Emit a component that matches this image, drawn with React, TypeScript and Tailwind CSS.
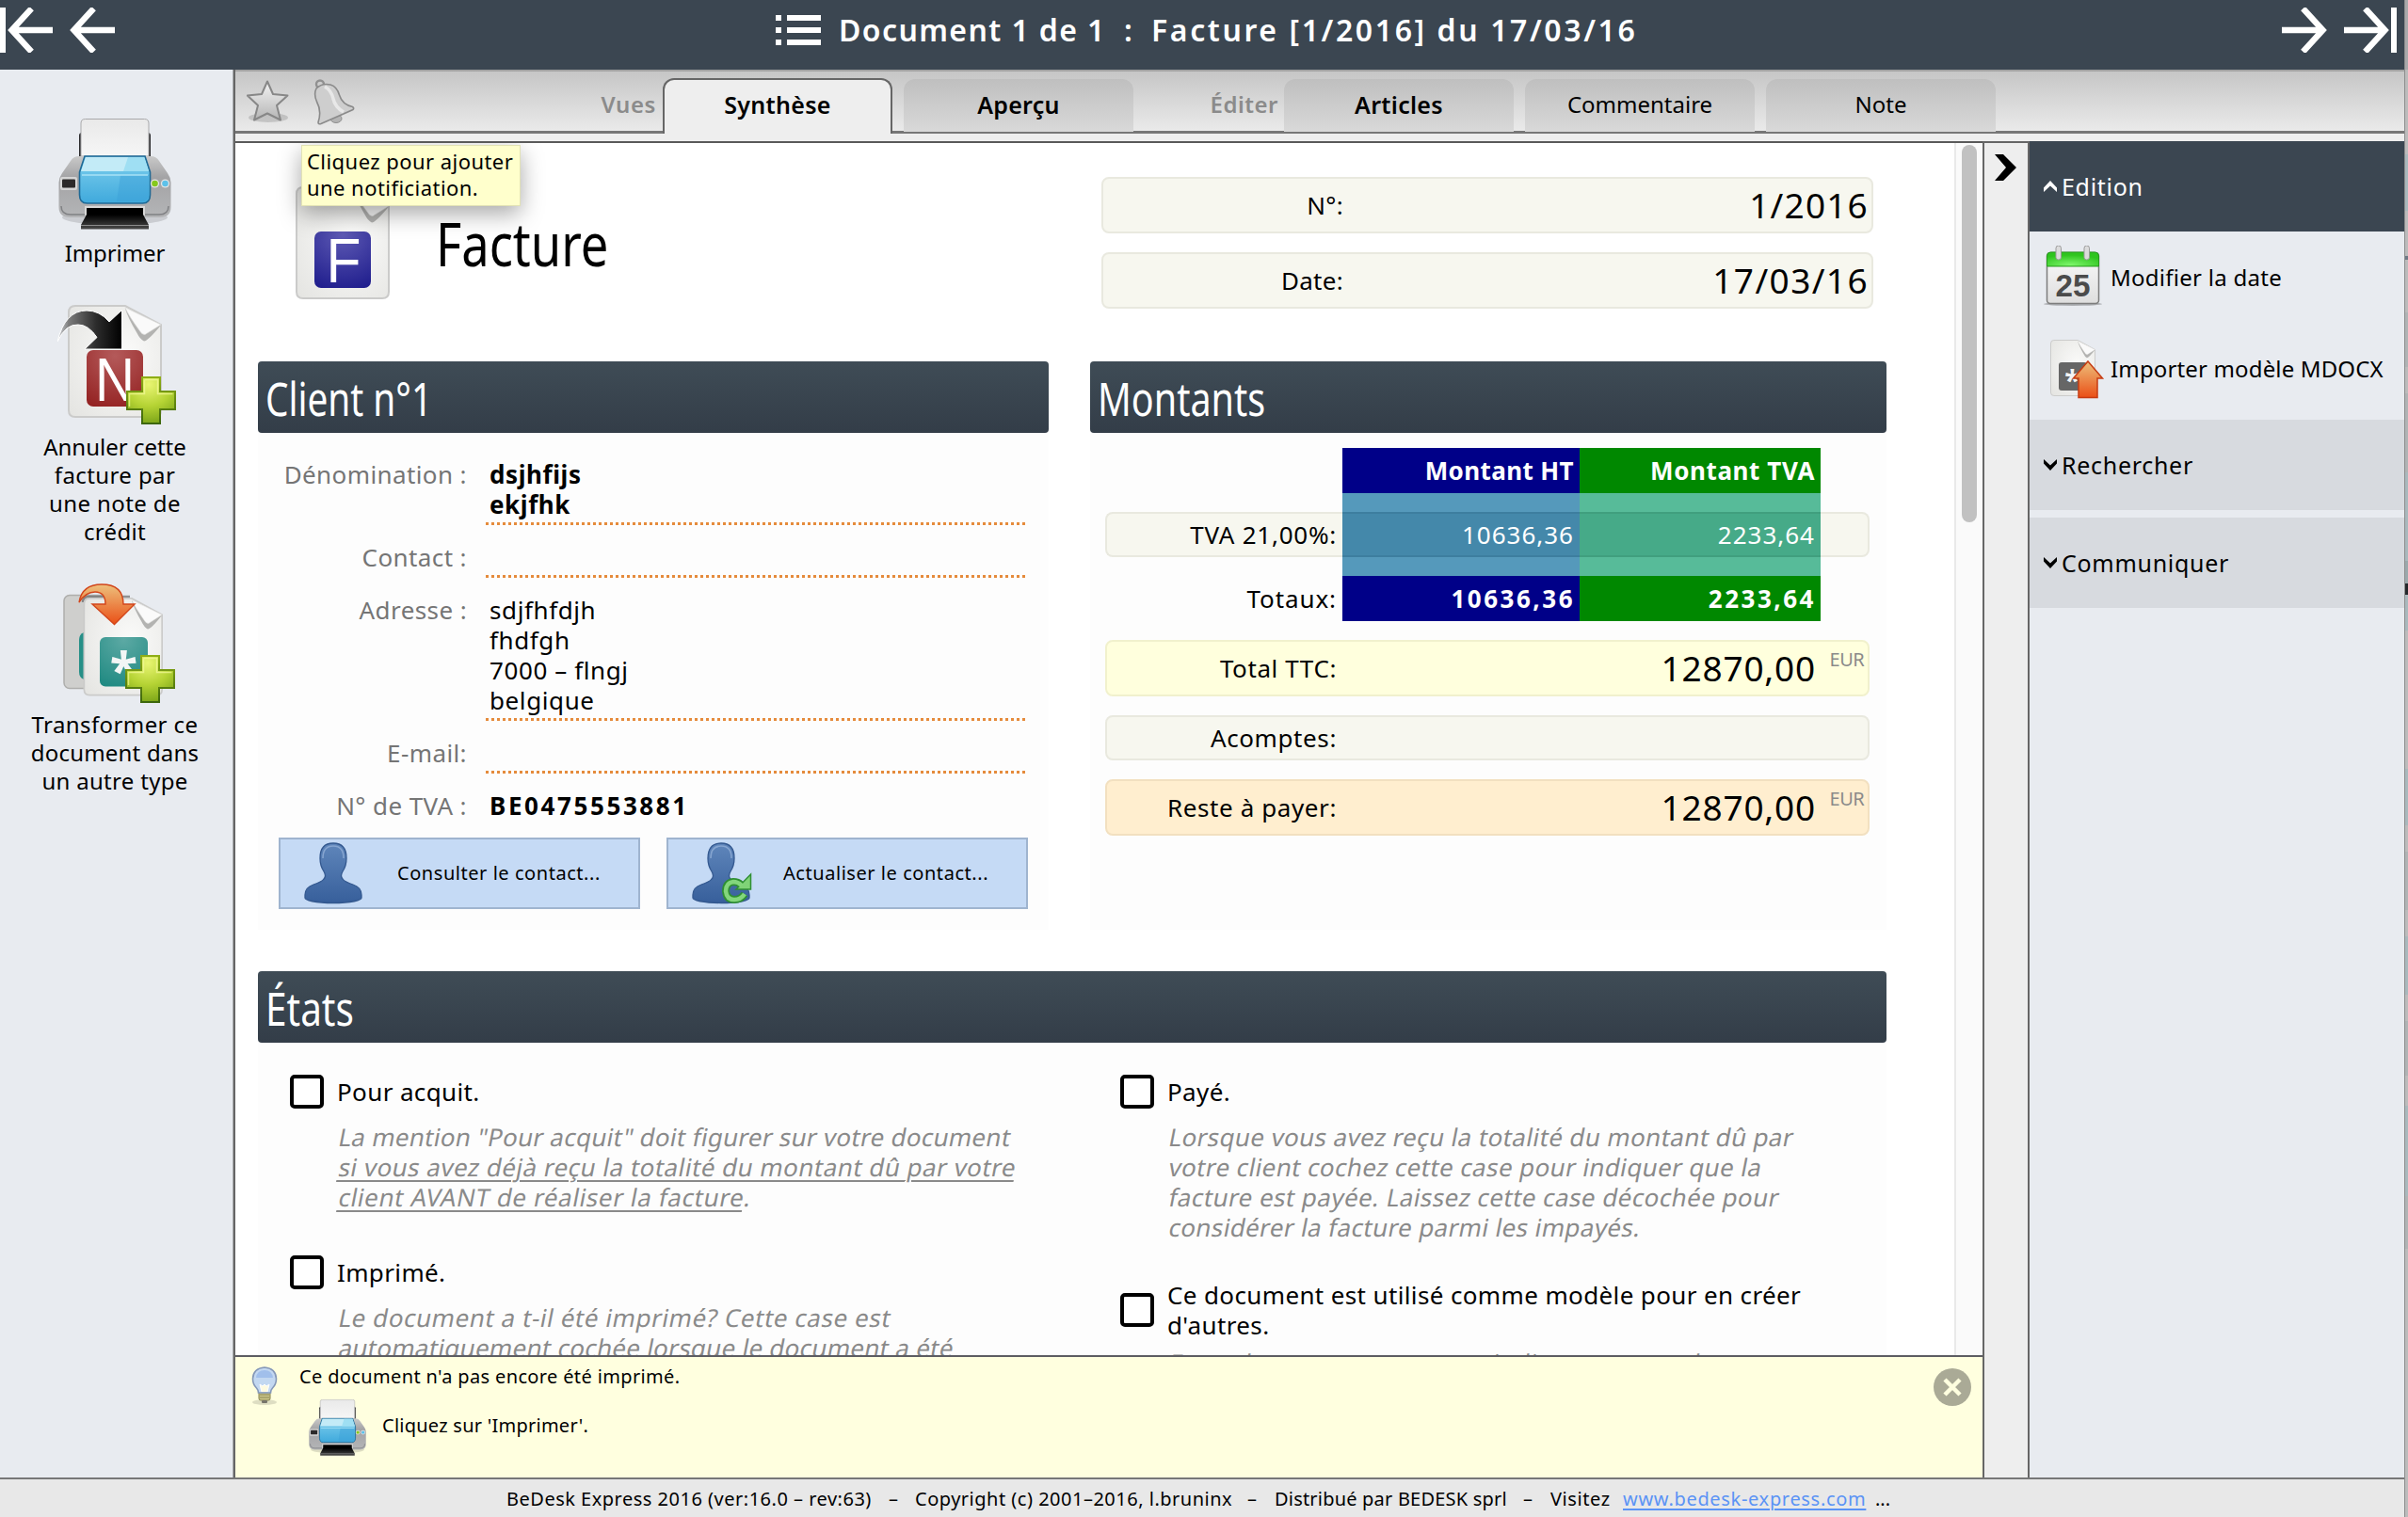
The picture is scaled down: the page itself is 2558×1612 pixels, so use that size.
import React from "react";

const HEADING_GRADIENT = "bg-gradient-to-b from-[#3f4c56] to-[#333d48]";

function Arrow({ flip = false }: { flip?: boolean }) {
  return (
    <svg width="48" height="48" viewBox="0 0 48 48" className={flip ? "-scale-x-100" : ""}>
      <path d="M48 24H7M25.5 1L4.5 24l21 23" fill="none" stroke="#fff" strokeWidth="6.4" />
    </svg>
  );
}

function PrinterIcon({ className = "" }: { className?: string }) {
  return (
    <svg viewBox="0 0 120 118" className={className}>
      <defs>
        <linearGradient id="prBody" x1="0" y1="0" x2="0" y2="1">
          <stop offset="0" stopColor="#c9c9c9" />
          <stop offset=".35" stopColor="#a3a3a5" />
          <stop offset="1" stopColor="#b4b5b7" />
        </linearGradient>
        <linearGradient id="prPaper" x1="0" y1="0" x2="0" y2="1">
          <stop offset="0" stopColor="#e9e9e9" />
          <stop offset="1" stopColor="#f6f6f6" />
        </linearGradient>
        <linearGradient id="prGlass" x1="0" y1="0" x2="0" y2="1">
          <stop offset="0" stopColor="#7fd0ee" />
          <stop offset="1" stopColor="#3fa9dc" />
        </linearGradient>
        <linearGradient id="prTray" x1="0" y1="0" x2="0" y2="1">
          <stop offset="0" stopColor="#000" />
          <stop offset="1" stopColor="#4a4a4a" />
        </linearGradient>
      </defs>
      <ellipse cx="60" cy="105" rx="56" ry="8" fill="#000" opacity=".13" />
      <rect x="22" y="15" width="76" height="30" rx="3" fill="#2b2b2d" />
      <path d="M24 40V5q0-4.500 4.500-4.500h63q4.500 0 4.500 4.500v35z" fill="url(#prPaper)" stroke="#a9a9ab" />
      <path d="M22 40h76q6 0 9 5l9 13q3.500 5 3.500 10v26q0 11-12 11H12.500q-12 0-12-11V68q0-5 3.500-10l9-13q3-5 9-5z" fill="url(#prBody)" />
      <path d="M3 93q0 9 10 9h94q10 0 10-9" fill="none" stroke="#808184" strokeWidth="1.500" />
      <path d="M28 40h64l5.500 17v24q0 9-8 9h-59q-8 0-8-9V57z" fill="url(#prGlass)" stroke="#1f6a96" strokeWidth="1.600" />
      <path d="M29 41h62l5 15H24z" fill="#c3ebf7" />
      <path d="M74 41h17l5 15H69z" fill="#9fdff3" />
      <path d="M66 60h30v20q0 8-8 8H62z" fill="#3b9fd6" opacity=".45" />
      <path d="M25 60h70" stroke="#a9e2f6" strokeWidth="1.500" />
      <rect x="2" y="62" width="18" height="14" rx="2" fill="#d5d5d5" />
      <rect x="4" y="64.500" width="14" height="9" rx="1" fill="#2c2a2a" />
      <circle cx="102.500" cy="69" r="4.600" fill="#e4e4e4" />
      <circle cx="102.500" cy="69" r="3.300" fill="#86c91c" />
      <circle cx="113.500" cy="69" r="4.600" fill="#e4e4e4" />
      <circle cx="113.500" cy="69" r="3.300" fill="#5cc1ea" />
      <path d="M28 93h64v10H28z" fill="#d8d8d8" />
      <path d="M30 95h60v13H30z" fill="#000" />
      <path d="M30 102h60l6 11v4.500H24V113z" fill="url(#prTray)" />
      <path d="M24 113.500h72" stroke="#8b8b8b" strokeWidth="1.200" />
    </svg>
  );
}

function Sheet() {
  return (
    <>
      <path d="M1 8Q1 1 8 1h53l38 20v91q0 7-7 7H8q-7 0-7-7z" fill="url(#sheetFill)" stroke="#cbcbca" strokeWidth="2" />
      <path d="M61 4q3 10 12 25 4 8 8 9.500 4 0 18-17z" fill="#b3b3b1" />
      <path d="M61 3q4 9 15 24 3 5 6 4.500L99 21z" fill="#fafafa" stroke="#dcdcda" strokeWidth=".6" />
    </>
  );
}

function SharedDefs() {
  return (
    <svg className="absolute h-0 w-0">
      <defs>
        <radialGradient id="sheetFill" cx=".6" cy=".45" r=".8">
          <stop offset="0" stopColor="#fbfbfa" />
          <stop offset="1" stopColor="#e4e4e1" />
        </radialGradient>
        <radialGradient id="blueTile" cx=".5" cy=".05" r="1">
          <stop offset="0" stopColor="#5e5ab4" />
          <stop offset="1" stopColor="#211f8e" />
        </radialGradient>
        <radialGradient id="redTile" cx=".5" cy=".1" r="1">
          <stop offset="0" stopColor="#b45a5a" />
          <stop offset="1" stopColor="#932020" />
        </radialGradient>
        <radialGradient id="tealTile" cx=".5" cy=".05" r="1">
          <stop offset="0" stopColor="#5ca9a4" />
          <stop offset="1" stopColor="#208a82" />
        </radialGradient>
        <radialGradient id="plusFill" cx=".45" cy=".15" r=".95">
          <stop offset="0" stopColor="#e9f573" />
          <stop offset=".5" stopColor="#b5d334" />
          <stop offset="1" stopColor="#6e9a12" />
        </radialGradient>
        <linearGradient id="plusEdge" x1="0" y1="0" x2="0" y2="1">
          <stop offset="0" stopColor="#8fae16" />
          <stop offset="1" stopColor="#3c660c" />
        </linearGradient>
        <linearGradient id="inkArrow">
          <stop offset="0" stopColor="#555" stopOpacity=".1" />
          <stop offset=".2" stopColor="#777" />
          <stop offset=".6" stopColor="#2c2c2c" />
          <stop offset="1" stopColor="#000" />
        </linearGradient>
        <linearGradient id="orangeArrow" x1="0" y1="0" x2="0" y2="1">
          <stop offset="0" stopColor="#edc07c" />
          <stop offset="1" stopColor="#ea4f16" />
        </linearGradient>
        <linearGradient id="personFill" x1="0" y1="0" x2="0" y2="1">
          <stop offset="0" stopColor="#5f86bb" />
          <stop offset="1" stopColor="#375f9b" />
        </linearGradient>
      </defs>
    </svg>
  );
}

function Plus() {
  return (
    <g>
      <path d="M17 1h19v15h16v19H36v15H17V35H1V16h16z" fill="url(#plusFill)" stroke="url(#plusEdge)" strokeWidth="2" />
      <path d="M19.500 3.500h14v15h16M3.500 32V18.500h16v-15" fill="none" stroke="#f3fa9b" strokeWidth="1.500" opacity=".7" />
    </g>
  );
}

function CreditNoteIcon() {
  return (
    <svg width="126" height="130" viewBox="0 0 126 130">
      <g transform="translate(11 0)">
        <Sheet />
      </g>
      <rect x="31" y="48" width="60" height="60" rx="7" fill="url(#redTile)" />
      <text x="61" y="101.500" textAnchor="middle" fontSize="65" textLength="42" lengthAdjust="spacingAndGlyphs" fontFamily="Liberation Sans" fill="#fff">N</text>
      <path d="M0 39Q8 6 31 6q14 0 24 12L68.500 5.500V47H29l13-12.500Q33 21 22 21 9 20 0 39z" fill="url(#inkArrow)" stroke="#fff" strokeWidth="1" />
      <g transform="translate(73 76)">
        <Plus />
      </g>
    </svg>
  );
}

function TransformIcon() {
  return (
    <svg width="120" height="129" viewBox="0 0 120 129">
      <rect x="1" y="12.500" width="60" height="99" rx="6" fill="#cfcfcd" stroke="#aeaeac" strokeWidth="1.500" />
      <path d="M24 52h-2q-5 2-5 8v34q0 6 5 8h2z" fill="#268f87" />
      <path d="M21 20q0-6 6-6h44" fill="none" stroke="#555" strokeWidth="2.500" opacity=".6" />
      <g transform="translate(21.500 15) scale(.845 .87)">
        <Sheet />
      </g>
      <rect x="39" y="57" width="51" height="52.500" rx="6" fill="url(#tealTile)" />
      <text x="64.500" y="112" textAnchor="middle" fontSize="54" fontWeight="700" fontFamily="Noto Sans" fill="#f2f6f5">*</text>
      <path d="M17 20Q20 1 41 1q23 0 23 21h12L54.500 43.500 31 22h14q0-13-11-13-10 0-17 11z" fill="url(#orangeArrow)" stroke="#d2461b" strokeWidth="1.400" />
      <g transform="translate(66 76)">
        <Plus />
      </g>
    </svg>
  );
}

function InvoiceIcon() {
  return (
    <svg width="100" height="120" viewBox="0 0 100 120">
      <Sheet />
      <rect x="20" y="48" width="60" height="60" rx="7" fill="url(#blueTile)" />
      <text x="51" y="102" textAnchor="middle" fontSize="66" textLength="37" lengthAdjust="spacingAndGlyphs" fontFamily="Liberation Sans" fill="#fff">F</text>
    </svg>
  );
}

function StarIcon() {
  return (
    <svg width="46" height="46" viewBox="0 0 46 46" className="mt-[2px]">
      <defs>
        <linearGradient id="starFill" x1="0" y1="0" x2="0" y2="1">
          <stop offset="0" stopColor="#f4f4f4" />
          <stop offset="1" stopColor="#b5b5b5" />
        </linearGradient>
      </defs>
      <ellipse cx="23" cy="40" rx="21" ry="5" fill="#000" opacity=".14" />
      <path d="M22 1.500l6 13.500 15.500 1.500-11.500 10.500 4 15.500-14-7-14 7 4-15.500L.8 16.500 16 15z" fill="url(#starFill)" stroke="#878787" strokeWidth="2" strokeLinejoin="round" />
    </svg>
  );
}

function BellIcon() {
  return (
    <svg width="44" height="50" viewBox="0 0 44 50">
      <circle cx="7" cy="5.500" r="4" fill="none" stroke="#919191" strokeWidth="2.400" />
      <ellipse cx="24" cy="42" rx="6" ry="4.500" fill="#b4b4b4" stroke="#8f8f8f" />
      <path d="M3 10Q9 4 18 6q7 2 9.500 11 3 10 14 12.500 2 1.500.5 3L8 47.500q-3 1-3-1.500Q9 34 3.500 24 0 16 3 10z" fill="#cecece" stroke="#8a8a8a" strokeWidth="1.600" />
      <path d="M12 8q7 4 9 13t11 14" fill="none" stroke="#e8e8e8" strokeWidth="3.500" />
    </svg>
  );
}

function PersonIcon({ refresh = false }: { refresh?: boolean }) {
  return (
    <svg width="64" height="66" viewBox="0 0 64 66">
      <ellipse cx="31" cy="62" rx="27" ry="2.500" fill="#28466f" opacity=".3" />
      <path d="M31 1q14 0 14 16 0 8-4 14-3 5 0 8 2 3 11 6 9 3 9 11v3q0 2-7 3.500-10 2-23 2t-23-2Q1 61 1 59v-3q0-8 9-11 9-3 11-6 3-3 0-8-4-6-4-14Q17 1 31 1z" fill="url(#personFill)" stroke="#33588f" strokeWidth="1.300" />
      <path d="M20 17q0-13 11-13t11 13" fill="none" stroke="#86a5d0" strokeWidth="1.500" />
      {refresh && (
        <>
          <path d="M56 55q-4 6-11 6-8 0-9-9 0-9 8-10 5 0 8 3" fill="none" stroke="#2f8f33" strokeWidth="8" />
          <path d="M62.500 34v16H47z" fill="#7fd377" stroke="#2f8f33" strokeWidth="1.500" />
          <path d="M56 55q-4 6-11 6-8 0-9-9 0-9 8-10 5 0 9 4" fill="none" stroke="#83d67c" strokeWidth="4.500" />
        </>
      )}
    </svg>
  );
}

function CalendarIcon() {
  return (
    <svg width="62" height="64" viewBox="0 0 62 64">
      <defs>
        <radialGradient id="calTop" cx=".45" cy=".9" r=".7">
          <stop offset="0" stopColor="#7df76a" />
          <stop offset="1" stopColor="#2fc41f" />
        </radialGradient>
        <linearGradient id="calPage" x1="0" y1="0" x2="0" y2="1">
          <stop offset="0" stopColor="#fafafa" />
          <stop offset="1" stopColor="#dedede" />
        </linearGradient>
      </defs>
      <ellipse cx="31" cy="62" rx="31" ry="2" fill="#000" opacity=".25" />
      <rect x="3.500" y="7.500" width="55" height="54" rx="3.500" fill="url(#calPage)" stroke="#7d7d7d" strokeWidth="1.500" />
      <path d="M3.500 22V11q0-4 4-4h47q4 0 4 4v11z" fill="url(#calTop)" stroke="#279b1d" />
      <rect x="13" y="0" width="5.500" height="15" rx="2.700" fill="#dcdcdc" stroke="#9b9b9b" />
      <rect x="43" y="0" width="5.500" height="15" rx="2.700" fill="#dcdcdc" stroke="#9b9b9b" />
      <text x="31" y="54" textAnchor="middle" fontSize="34" fontWeight="700" textLength="37" lengthAdjust="spacingAndGlyphs" fontFamily="Liberation Sans" fill="#4b4b4b">25</text>
    </svg>
  );
}

function ImportIcon() {
  return (
    <svg width="58" height="63" viewBox="0 0 58 63">
      <g transform="scale(.48 .5)">
        <Sheet />
      </g>
      <rect x="9" y="24" width="30" height="30" rx="3" fill="#666" />
      <text x="23.500" y="54" textAnchor="middle" fontSize="30" fontWeight="700" fontFamily="Noto Sans" fill="#f4f4f4">*</text>
      <path d="M40 23l15.500 18H50v20.500H30V41h-5.500z" fill="url(#orangeArrow)" stroke="#c63c13" strokeWidth="1.500" />
    </svg>
  );
}

function BulbIcon() {
  return (
    <svg width="30" height="42" viewBox="0 0 30 42">
      <ellipse cx="15" cy="38" rx="13" ry="3" fill="#000" opacity=".13" />
      <rect x="9" y="25" width="12" height="11" rx="2" fill="#c9c487" stroke="#86824f" />
      <path d="M10 30h10M10 33h10" stroke="#8b8755" />
      <rect x="12" y="36" width="6" height="3" rx="1" fill="#77756b" />
      <path d="M15 1q12 1 12.500 12 0 6-4 10-2 2-2 5h-13q0-3-2-5-4-4-4-10Q3 2 15 1z" fill="#c3d8f1" stroke="#8598b8" strokeWidth="1.600" />
      <path d="M6 12q1-8 9-8t9 8z" fill="#98b9ea" opacity=".8" />
      <path d="M12 27l-2-8 3 2 2-2 2 2 3-2-2 8" fill="#fffbe0" stroke="#fff" />
    </svg>
  );
}

function SideAction({ icon, lines, className, textClass }: { icon: React.ReactNode; lines: [string, string][]; className: string; textClass: string }) {
  return (
    <div className={`flex flex-col items-center ${className}`}>
      {icon}
      <div className={`w-full pr-[3px] text-center text-[24px] leading-[30px] ${textClass}`}>
        {lines.map(([t, c]) => (
          <div key={t} className={c}>{t}</div>
        ))}
      </div>
    </div>
  );
}

function Tab({ label, bold = false, className = "" }: { label: string; bold?: boolean; className?: string }) {
  return (
    <div
      className={`h-[56px] w-[244px] rounded-t-[12px] bg-gradient-to-b from-[#bfbfbf] to-[#d9d9d9] text-center leading-[54px] ${bold ? "text-[25px] font-semibold tracking-[0.3px]" : "text-[24px]"} ${className}`}
    >
      {label}
    </div>
  );
}

function SectionTitle({ text, scale }: { text: string; scale: string }) {
  return (
    <div className={`flex h-[76px] items-center rounded-[4px] pl-[8px] text-white ${HEADING_GRADIENT}`}>
      <span className={`origin-left whitespace-nowrap pt-[2px] text-[50px] leading-none ${scale}`}>{text}</span>
    </div>
  );
}

function TopField({ label, value, tracking }: { label: string; value: string; tracking: string }) {
  return (
    <div className="flex h-[60px] w-[820px] items-center rounded-[8px] border-2 border-[#e9e9df] bg-[#f7f7ef]">
      <div className="w-[255px] text-right text-[26px] tracking-[0.3px]">{label}</div>
      <div className={`flex-1 pr-[3px] pb-[2px] text-right text-[37px] leading-none ${tracking}`}>{value}</div>
    </div>
  );
}

function ClientRow({ label, lines, bold = false, last = false }: { label: string; lines: string[]; bold?: boolean; last?: boolean }) {
  return (
    <div className={`flex text-[26px] leading-[32px] ${last ? "" : "mb-[18px]"}`}>
      <div className="w-[222px] text-right tracking-[0.4px] text-[#757575]">{label}</div>
      <div className={`ml-[20px] w-[573px] pl-[4px] ${last ? "" : "border-b-[3px] border-dotted border-[#e58b3c] pb-[3px]"} ${bold ? "font-bold" : ""}`}>
        {lines.map((l, i) => (
          <div key={i} className={`h-8 whitespace-nowrap ${last ? "tracking-[2.6px]" : "tracking-[0.6px]"}`}>{l}</div>
        ))}
      </div>
    </div>
  );
}

function ContactButton({ label, refresh = false }: { label: string; refresh?: boolean }) {
  return (
    <div className="flex h-[76px] w-[384px] items-center border-2 border-[#9fb4cf] bg-[#c5daf5] pl-[25px]">
      <PersonIcon refresh={refresh} />
      <span className={`whitespace-nowrap pb-px text-[20px] tracking-[0.55px] ${refresh ? "ml-[33px]" : "ml-[35px]"}`}>{label}</span>
    </div>
  );
}

function AmountBox({ label, value, skin, tall = false }: { label: string; value?: string; skin: string; tall?: boolean }) {
  return (
    <div className={`mt-5 flex rounded-[8px] border-2 ${skin} ${tall ? "h-[60px]" : "h-[48px]"}`}>
      <div className="flex w-[244px] items-center justify-end text-[26px] tracking-[0.6px]">{label}</div>
      {value && (
        <>
          <div className="flex w-[509px] items-center justify-end pb-[2px] text-[37px] leading-none tracking-[0.8px]">{value}</div>
          <div className="flex-1 pt-[3px] pr-[4px] text-right text-[20px] leading-[32px] tracking-[-0.6px] text-[#8a8a8a]">EUR</div>
        </>
      )}
    </div>
  );
}

function CheckItem({ lines, children, className = "", descClass = "mt-[14px]" }: { lines: string[]; children: React.ReactNode; className?: string; descClass?: string }) {
  return (
    <div className={`whitespace-nowrap text-[26px] leading-[32px] tracking-[0.37px] ${className}`}>
      <div className="flex items-center">
        <div className="h-[36px] w-[36px] rounded-[5px] border-4 border-black bg-white" />
        <div className="ml-[14px]">
          {lines.map((l) => (
            <div key={l}>{l}</div>
          ))}
        </div>
      </div>
      <div className={`ml-[49px] text-[#8a8a8a] ${descClass}`}>{children}</div>
    </div>
  );
}

function Slanted({ children }: { children: React.ReactNode }) {
  return <div className="origin-bottom-left -skew-x-[11deg]">{children}</div>;
}

function MenuHeader({ label, open = false }: { label: string; open?: boolean }) {
  return (
    <div className={`flex h-[96px] items-center pl-[15px] text-[25px] tracking-[0.7px] ${open ? "bg-[#3b4651] text-white" : "bg-[#d7dadf]"}`}>
      <svg width="14" height="12" viewBox="0 0 14 12" className={open ? "" : "-scale-y-100"}>
        <path d="M0 12V7.500L7 0l7 7.500V12L7 5.500z" fill="currentColor" />
      </svg>
      <span className="ml-[5px] pt-[2px]">{label}</span>
    </div>
  );
}

const EDGE: [number, string][] = [
  [74, "bg-[#a9a9ab]"], [90, "bg-[#bcbcbc]"], [60, "bg-[#a9b9bd]"], [48, "bg-[#bcbcbc]"], [4, "bg-[#6e7a86]"], [56, "bg-[#bcbcbc]"],
  [58, "bg-[#b0b4b5]"], [28, "bg-[#bcbcbc]"], [84, "bg-[#b0b4b5]"], [94, "bg-[#a9b9bd]"], [24, "bg-[#9ba9ac]"], [12, "bg-[#24282b]"],
  [38, "bg-[#a9b9bd]"], [147, "bg-[#bcbcbc]"], [60, "bg-[#a9b9bd]"], [28, "bg-[#bcbcbc]"], [62, "bg-[#b0b4b5]"], [28, "bg-[#bcbcbc]"],
  [62, "bg-[#a9b9bd]"], [28, "bg-[#bcbcbc]"], [58, "bg-[#b0b4b5]"], [32, "bg-[#bcbcbc]"], [96, "bg-[#a9b9bd]"], [56, "bg-[#b0b4b5]"],
];

export default function App() {
  return (
    <div className="flex h-[1612px] w-[2558px] overflow-hidden bg-[#bcbcbc] font-['Noto_Sans',sans-serif] text-black">
      <SharedDefs />
      <div className="flex w-[2554px] flex-col">
        {/* title bar */}
        <header className="flex h-[74px] shrink-0 items-start bg-[#3b4651] pt-[8px] text-white">
          <div className="h-[48px] w-[6px] bg-white" />
          <div className="ml-[2px]"><Arrow /></div>
          <div className="ml-[18px]"><Arrow /></div>
          <svg width="48" height="32" viewBox="0 0 48 32" className="mt-[8px] ml-[702px]">
            <path d="M0 0h6v6H0zM12 0h36v6H12zM0 13h6v6H0zM12 13h36v6H12zM0 26h6v6H0zM12 26h36v6H12z" fill="#fff" />
          </svg>
          <div className="ml-[18px] flex h-[48px] w-[1534px] items-center whitespace-pre text-[32px] font-semibold">
            <span className="w-[304px] pl-px tracking-[1.4px]">Document 1 de 1</span>
            <span className="w-[29px]">:</span>
            <span className="tracking-[2.6px]">Facture [1/2016] du 17/03/16</span>
          </div>
          <Arrow flip />
          <div className="ml-[18px]"><Arrow flip /></div>
          <div className="ml-[2px] h-[48px] w-[6px] bg-white" />
        </header>

        <div className="flex min-h-0 flex-1">
          {/* action bar */}
          <aside className="flex w-[250px] shrink-0 flex-col border-r-[2px] border-[#666] bg-[#e8ebf0]">
            <div className="flex flex-1 flex-col border-r border-[#a9abae]">
              <SideAction
                className="pt-[52px]"
                textClass="pt-[10px]"
                icon={<PrinterIcon className="mr-[3px] h-[118px] w-[120px]" />}
                lines={[["Imprimer", "tracking-[-0.1px]"]]}
              />
              <SideAction
                className="pt-[40px]"
                textClass="pt-[6px]"
                icon={<CreditNoteIcon />}
                lines={[["Annuler cette", ""], ["facture par", "tracking-[0.4px]"], ["une note de", "tracking-[0.4px]"], ["crédit", "tracking-[0.3px]"]]}
              />
              <SideAction
                className="pt-[40px]"
                textClass="pt-[6px]"
                icon={<div className="pl-[6px]"><TransformIcon /></div>}
                lines={[["Transformer ce", "tracking-[0.4px]"], ["document dans", "tracking-[0.2px]"], ["un autre type", "tracking-[0.3px]"]]}
              />
            </div>
          </aside>

          <div className="flex min-w-0 flex-1 flex-col">
            {/* tabs */}
            <div className="flex h-[68px] shrink-0 items-start border-t-2 border-[#a3a3a3] bg-gradient-to-b from-[#c6c6c6] to-[#ececec]">
              <div className="flex h-full flex-1 border-b-[3px] border-[#777]">
                <div className="ml-[12px] pt-[7px]"><StarIcon /></div>
                <div className="ml-[25px] pt-[8px]"><BellIcon /></div>
                <div className="ml-[59px] w-[268px] pt-[8px] pr-[7px] text-right text-[24px] leading-[54px] font-semibold tracking-[0.6px] text-[#8b8b8b]">Vues</div>
                <div className="mt-[7px] -mb-[3px] h-[61px] w-[244px] shrink-0 rounded-t-[12px] border-2 border-b-0 border-[#666] bg-[#eee] text-center text-[25px] leading-[53px] font-semibold tracking-[0.3px]">Synthèse</div>
                <Tab label="Aperçu" bold className="mt-[8px] ml-[12px]" />
                <div className="w-[160px] pt-[8px] pr-[6px] text-right text-[24px] leading-[54px] font-semibold tracking-[0.5px] text-[#8b8b8b]">Éditer</div>
                <Tab label="Articles" bold className="mt-[8px]" />
                <Tab label="Commentaire" className="mt-[8px] ml-[12px]" />
                <Tab label="Note" className="mt-[8px] ml-[12px]" />
              </div>
            </div>
            <div className="h-[8px] shrink-0 bg-[#eee]" />

            <div className="flex min-h-0 flex-1">
              <div className="flex w-[1858px] shrink-0 flex-col border-r-2 border-[#666]">
                {/* document */}
                <div className="flex h-[1290px] shrink-0 border-t-2 border-[#5a5a5a] bg-white">
                  <main className="relative h-full w-[1826px] overflow-hidden pr-[72px] pl-[24px]">
                    <div className="absolute top-[2px] left-[70px] h-[65px] w-[233px] border border-[#e2e2b4] bg-[#ffffcc] pt-[2px] pl-[5px] text-[22px] leading-[28px] tracking-[0.45px] whitespace-nowrap shadow-[0_8px_24px_rgba(0,0,0,0.35)]">
                      <div>Cliquez pour ajouter</div>
                      <div>une notificiation.</div>
                    </div>

                    <div className="flex h-[232px]">
                      <div className="flex w-[896px] pt-[46px] pl-[40px]">
                        <InvoiceIcon />
                        <div className="mt-[29px] ml-[49px] h-[64px] origin-left scale-x-[0.82] text-[64px] leading-[64px]">Facture</div>
                      </div>
                      <div className="flex flex-col gap-[20px] pt-[36px]">
                        <TopField label="N°:" value="1/2016" tracking="tracking-[1.2px]" />
                        <TopField label="Date:" value="17/03/16" tracking="tracking-[1.4px]" />
                      </div>
                    </div>

                    <div className="flex h-[648px] gap-[44px]">
                      <section className="h-[604px] w-[840px] bg-[#fdfdfd]">
                        <SectionTitle text="Client n°1" scale="scale-x-[0.775]" />
                        <div className="pt-[28px]">
                          <ClientRow label="Dénomination :" lines={["dsjhfijs", "ekjfhk"]} bold />
                          <ClientRow label="Contact :" lines={[""]} />
                          <ClientRow label="Adresse :" lines={["sdjfhfdjh", "fhdfgh", "7000 – flngj", "belgique"]} />
                          <ClientRow label="E-mail:" lines={[""]} />
                          <ClientRow label="N° de TVA :" lines={["BE0475553881"]} bold last />
                        </div>
                        <div className="mt-[18px] ml-[22px] flex gap-[28px]">
                          <ContactButton label="Consulter le contact..." />
                          <ContactButton label="Actualiser le contact..." refresh />
                        </div>
                      </section>

                      <section className="h-[604px] w-[846px] bg-[#fdfdfd]">
                        <SectionTitle text="Montants" scale="scale-x-[0.79]" />
                        <div className="mr-[18px] ml-[16px] pt-[16px] text-[26px]">
                          <div className="ml-[252px] flex h-[48px] items-center text-right font-bold text-white">
                            <div className="h-full w-[252px] bg-[#000088] pr-[6px] leading-[48px] tracking-[0.4px]">Montant HT</div>
                            <div className="h-full w-[256px] bg-[#008800] pr-[6px] leading-[48px] tracking-[0.6px]">Montant TVA</div>
                          </div>
                          <div className="flex h-[88px] items-center">
                            <div className="h-[48px] w-[252px] rounded-l-[8px] border-2 border-r-0 border-[#e9e9df] bg-[#f7f7ef] pr-[6px] text-right leading-[44px] tracking-[0.75px]">TVA 21,00%:</div>
                            <div className="flex h-full w-[252px] items-center bg-[#5599bb]">
                              <div className="h-[48px] flex-1 border-y-2 border-[#3d7e9f] bg-[#4488aa] pr-[6px] text-right leading-[44px] tracking-[1px] text-white">10636,36</div>
                            </div>
                            <div className="flex h-full w-[256px] items-center bg-[#57bb99]">
                              <div className="h-[48px] flex-1 border-y-2 border-[#409f7e] bg-[#46aa88] pr-[6px] text-right leading-[44px] tracking-[1px] text-white">2233,64</div>
                            </div>
                            <div className="h-[48px] flex-1 rounded-r-[8px] border-2 border-l-0 border-[#e9e9df] bg-[#f7f7ef]" />
                          </div>
                          <div className="flex h-[48px] text-right leading-[48px]">
                            <div className="w-[252px] pr-[6px] tracking-[0.9px]">Totaux:</div>
                            <div className="w-[252px] bg-[#000088] pr-[5px] font-bold tracking-[2.5px] text-white">10636,36</div>
                            <div className="w-[256px] bg-[#008800] pr-[5px] font-bold tracking-[2.5px] text-white">2233,64</div>
                          </div>
                          <AmountBox label="Total TTC:" value="12870,00" tall skin="border-[#f1f1cd] bg-[#ffffdd]" />
                          <AmountBox label="Acomptes:" skin="border-[#e9e9df] bg-[#f7f7ef]" />
                          <AmountBox label="Reste à payer:" value="12870,00" tall skin="border-[#f2e0c0] bg-[#ffeecf]" />
                        </div>
                      </section>
                    </div>

                    <section>
                      <SectionTitle text="États" scale="scale-x-[0.81]" />
                      <div className="flex h-[400px] bg-[#fdfdfd]">
                        <div className="w-[882px] pt-[34px] pl-[34px]">
                          <CheckItem lines={["Pour acquit."]}>
                            <Slanted><span className="tracking-[0.27px]">La mention "Pour acquit" doit figurer sur votre document</span></Slanted>
                            <Slanted><span className="tracking-[0.46px] underline decoration-2 underline-offset-[4px]">si vous avez déjà reçu la totalité du montant dû par votre</span></Slanted>
                            <Slanted><span className="tracking-[0.6px] underline decoration-2 underline-offset-[4px]">client AVANT de réaliser la facture</span>.</Slanted>
                          </CheckItem>
                          <CheckItem lines={["Imprimé."]} className="mt-[46px]">
                            <Slanted><span className="tracking-[0.55px]">Le document a t-il été imprimé? Cette case est</span></Slanted>
                            <Slanted><span className="tracking-[0.27px]">automatiquement cochée lorsque le document a été</span></Slanted>
                          </CheckItem>
                        </div>
                        <div className="pt-[34px] pl-[34px]">
                          <CheckItem lines={["Payé."]}>
                            <Slanted>Lorsque vous avez reçu la totalité du montant dû par</Slanted>
                            <Slanted>votre client cochez cette case pour indiquer que la</Slanted>
                            <Slanted><span className="tracking-[0.42px]">facture est payée. Laissez cette case décochée pour</span></Slanted>
                            <Slanted>considérer la facture parmi les impayés.</Slanted>
                          </CheckItem>
                          <CheckItem lines={["Ce document est utilisé comme modèle pour en créer", "d'autres."]} className="mt-[40px]" descClass="mt-[8px]">
                            <Slanted>En cochant cette case vous indiquez que ce document</Slanted>
                          </CheckItem>
                        </div>
                      </div>
                    </section>
                  </main>
                  <div className="flex w-[30px] justify-center border-l-2 border-[#e9e9e9] bg-[#fafafa] pt-[2px]">
                    <div className="h-[401px] w-[16px] rounded-full bg-[#c1c1c1]" />
                  </div>
                </div>

                {/* notice */}
                <div className="flex flex-1 border-t-2 border-[#5d5d62] bg-[#ffffdf] text-[20px]">
                  <div className="pt-[10px] pl-[16px]"><BulbIcon /></div>
                  <div className="ml-[22px] pt-[7px]">
                    <div className="leading-[28px] tracking-[0.36px]">Ce document n'a pas encore été imprimé.</div>
                    <div className="mt-[10px] ml-[10px] flex items-center">
                      <PrinterIcon className="h-[60px] w-[61px]" />
                      <span className="-mt-[5px] ml-[17px] tracking-[0.25px]">Cliquez sur 'Imprimer'.</span>
                    </div>
                  </div>
                  <svg width="40" height="40" viewBox="0 0 40 40" className="mt-[12px] mr-[12px] ml-auto">
                    <circle cx="20" cy="20" r="20" fill="#aaaa96" />
                    <path d="M12 12l16 16M28 12L12 28" stroke="#ffffdf" strokeWidth="4.500" />
                  </svg>
                </div>
              </div>

              {/* panel toggle */}
              <div className="w-[48px] shrink-0 border-t-2 border-r-2 border-[#666] bg-[#eee] pt-[12px] pl-[11px]">
                <svg width="23" height="28" viewBox="0 0 23 28">
                  <path d="M0 0h9l14 14L9 28H0l12-14z" fill="#000" />
                </svg>
              </div>

              {/* contextual menu */}
              <aside className="flex-1 bg-[#e8ebf0]">
                <MenuHeader label="Edition" open />
                <div className="h-[200px] text-[24px] whitespace-nowrap">
                  <div className="flex h-[100px] items-center pl-[15px]">
                    <div className="-mt-[6px]"><CalendarIcon /></div>
                    <span className="ml-[9px] pb-[2px] tracking-[0.27px]">Modifier la date</span>
                  </div>
                  <div className="flex h-[92px] items-center pl-[22px]">
                    <ImportIcon />
                    <span className="ml-[6px] pb-px tracking-[0.15px]">Importer modèle MDOCX</span>
                  </div>
                </div>
                <MenuHeader label="Rechercher" />
                <div className="h-[8px]" />
                <MenuHeader label="Communiquer" />
              </aside>
            </div>
          </div>
        </div>

        {/* status bar */}
        <footer className="flex h-[42px] shrink-0 items-center border-t-2 border-[#777] bg-[#e8e8e8] pt-[2px] pl-[538px] text-[20px] whitespace-nowrap">
          <span className="w-[406px] tracking-[0.5px]">BeDesk Express 2016 (ver:16.0 – rev:63)</span>
          <span className="w-[28px]">–</span>
          <span className="w-[353px] tracking-[0.5px]">Copyright (c) 2001–2016, l.bruninx</span>
          <span className="w-[29px]">–</span>
          <span className="w-[264px] tracking-[0.2px]">Distribué par BEDESK sprl</span>
          <span className="w-[29px]">–</span>
          <span className="w-[77px] tracking-[0.6px]">Visitez</span>
          <span className="w-[268px] tracking-[0.68px]"><a className="text-[#5b93f5] underline decoration-2 underline-offset-[3px]">www.bedesk-express.com</a></span>
          <span>...</span>
        </footer>
      </div>

      {/* window edge */}
      <div className="w-[4px] border-l border-[#8d8d8d]">
        {EDGE.map(([h, c], i) => (
          <div key={i} className={c} style={{ height: h }} />
        ))}
      </div>
    </div>
  );
}
